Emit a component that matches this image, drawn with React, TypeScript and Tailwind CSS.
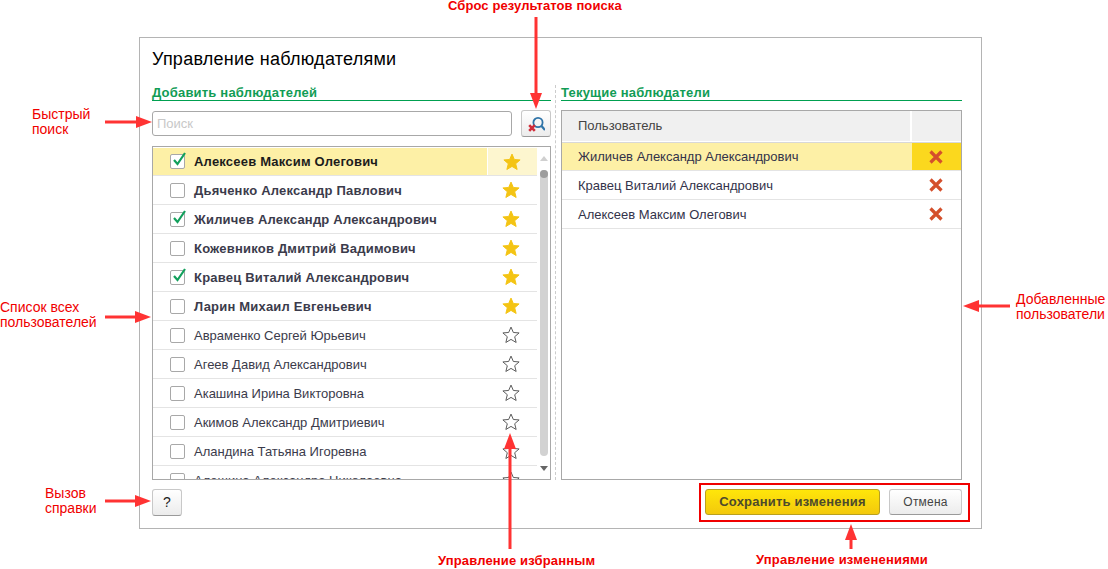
import type { ReactNode } from 'react';

const users = [
  { name: 'Алексеев Максим Олегович', bold: true, checked: true, fav: true, active: true },
  { name: 'Дьяченко Александр Павлович', bold: true, fav: true },
  { name: 'Жиличев Александр Александрович', bold: true, checked: true, fav: true },
  { name: 'Кожевников Дмитрий Вадимович', bold: true, fav: true },
  { name: 'Кравец Виталий Александрович', bold: true, checked: true, fav: true },
  { name: 'Ларин Михаил Евгеньевич', bold: true, fav: true },
  { name: 'Авраменко Сергей Юрьевич' },
  { name: 'Агеев Давид Александрович' },
  { name: 'Акашина Ирина Викторовна' },
  { name: 'Акимов Александр Дмитриевич' },
  { name: 'Аландина Татьяна Игоревна' },
  { name: 'Алешина Александра Николаевна' },
];

const watchers = ['Жиличев Александр Александрович', 'Кравец Виталий Александрович', 'Алексеев Максим Олегович'];

const STAR = '10,1.2 12.6,7.2 19,7.7 14.1,11.9 15.7,18.3 10,14.9 4.3,18.3 5.9,11.9 1,7.7 7.4,7.2';

function Star({ filled }: { filled?: boolean }) {
  return (
    <svg width="18" height="18" viewBox="0 0 20 20">
      <polygon points={STAR} fill={filled ? '#f4c414' : 'none'} stroke={filled ? '#f4c414' : '#5a5a5a'} strokeWidth="1.1" />
    </svg>
  );
}

function Checkbox({ checked }: { checked?: boolean }) {
  return (
    <span className="relative block w-[15px] h-[15px] shrink-0 rounded-[2px] border border-[#a8a8a8] bg-white">
      {checked && (
        <svg className="absolute left-[1px] top-[-4px]" width="15" height="16" viewBox="0 0 15 16">
          <path d="M2 9 L5.5 13 L13 2" fill="none" stroke="#12a05c" strokeWidth="2.2" />
        </svg>
      )}
    </span>
  );
}

function RemoveIcon() {
  return (
    <svg width="14" height="14" viewBox="0 0 14 14">
      <path d="M1.5 1.5 L12.5 12.5 M12.5 1.5 L1.5 12.5" stroke="#d4502c" strokeWidth="3.2" />
    </svg>
  );
}

function Heading({ children }: { children: ReactNode }) {
  return (
    <div className="h-[21px] pt-[5px] border-b border-[#00a050] text-[13px] font-bold leading-[15px] tracking-[0.2px] text-[#119c55]">
      {children}
    </div>
  );
}

function Note({ className, children }: { className: string; children: ReactNode }) {
  return <div className={`absolute text-[#f00000] ${className}`}>{children}</div>;
}

// pointer arrows of the annotations, from tail to tip
function Arrow({ x1, y1, x2, y2 }: { x1: number; y1: number; x2: number; y2: number }) {
  const horizontal = y1 === y2;
  const dir = horizontal ? Math.sign(x2 - x1) : Math.sign(y2 - y1);
  const head = horizontal
    ? `${x2},${y2} ${x2 - 16 * dir},${y2 - 6} ${x2 - 16 * dir},${y2 + 6}`
    : `${x2},${y2} ${x2 - 6},${y2 - 16 * dir} ${x2 + 6},${y2 - 16 * dir}`;
  return (
    <g>
      <line x1={x1} y1={y1} x2={horizontal ? x2 - 14 * dir : x2} y2={horizontal ? y2 : y2 - 14 * dir} stroke="#ff3333" strokeWidth="3" />
      <polygon points={head} fill="#ff3333" />
    </g>
  );
}

export default function App() {
  return (
    <div className="relative w-[1108px] h-[569px] overflow-hidden bg-white font-['Liberation_Sans',Arial,sans-serif] pl-[139px] pt-[37px]">
      <div className="w-[843px] h-[492px] border border-[#b4b4b4] bg-white pl-[12px] pr-[19px] flex flex-col">
        <h1 className="h-[40px] pt-[11px] text-[18px] leading-[21px] tracking-[0.25px] text-black">Управление наблюдателями</h1>

        <div className="flex h-[400px] mt-[2px]">
          {/* Left column */}
          <div className="w-[399px] flex flex-col">
            <Heading>Добавить наблюдателей</Heading>
            <div className="flex h-[27px] items-center justify-between mt-[9px]">
              <input
                placeholder="Поиск"
                className="w-[360px] h-[25px] rounded-[3px] border border-[#a8a8a8] px-[4px] text-[13px] outline-none placeholder:text-[#c8c8c8]"
              />
              <button className="flex items-center justify-center w-[30px] h-[27px] rounded-[3px] border border-[#c8c8c8] border-b-[#9a9a9a] bg-gradient-to-b from-white to-[#ececec]">
                <svg width="18" height="18" viewBox="0 0 18 18">
                  <circle cx="11" cy="7.5" r="4.6" fill="none" stroke="#2f74a8" strokeWidth="1.8" />
                  <path d="M14.5 11 L18 15" stroke="#2f74a8" strokeWidth="2.2" />
                  <path d="M2.2 10.2 L7.8 15.8 M7.8 10.2 L2.2 15.8" stroke="#d02d3a" strokeWidth="2.6" />
                </svg>
              </button>
            </div>
            <div className="mt-[9px] h-[334px] border border-[#a8a8a8] flex overflow-hidden">
              <div className="w-[384px] shrink-0">
                {users.map((user) => (
                  <div
                    key={user.name}
                    className={`flex h-[29px] shrink-0 items-stretch border-b border-[#e4e4e4] ${user.active ? 'bg-[#fdf0a6] border-t border-t-white' : 'bg-white'}`}
                  >
                    <div className="flex-1 flex items-center pl-[17px] gap-[9px]">
                      <Checkbox checked={user.checked} />
                      <span
                        className={`text-[13px] ${user.bold ? 'font-bold tracking-[0.2px]' : ''} ${user.active ? 'text-[#1c1c1c]' : 'pt-[2px] text-[#3b3b4b]'}`}
                      >
                        {user.name}
                      </span>
                    </div>
                    <div className={`w-[50px] pr-[2px] flex items-center justify-center ${user.active ? 'bg-[#fdf6cf] border-l border-white' : ''}`}>
                      <Star filled={user.fav} />
                    </div>
                  </div>
                ))}
              </div>
              {/* Scrollbar */}
              <div className="flex-1 flex flex-col items-center pt-[9px]">
                <span className="h-0 w-0 border-x-[4px] border-b-[5px] border-x-transparent border-b-[#d0d0d0]" />
                <span className="mt-[9px] h-[286px] w-[8px] rounded-full bg-[#d2d2d2]">
                  <span className="block h-[8px] w-[8px] rounded-full bg-[#9c9c9c]" />
                </span>
                <span className="mt-[10px] h-0 w-0 border-x-[4px] border-t-[5px] border-x-transparent border-t-[#666]" />
              </div>
            </div>
          </div>

          {/* Divider */}
          <div className="w-[10px] pl-[4px]">
            <div className="h-[395px] mt-[5px] border-l border-dashed border-[#cccccc]" />
          </div>

          {/* Right column */}
          <div className="w-[401px] flex flex-col">
            <Heading>Текущие наблюдатели</Heading>
            <div className="mt-[9px] h-[370px] border border-[#a8a8a8]">
              <div className="flex h-[32px] border-b border-[#d8d8d8] pb-[1px]">
                <div className="flex-1 flex items-center pl-[16px] bg-[#f0f0f0] text-[13px] text-[#444444] border-r-2 border-white">
                  Пользователь
                </div>
                <div className="w-[49px] bg-[#f0f0f0]" />
              </div>
              {watchers.map((name, i) => (
                <div key={name} className={`flex border-b border-[#e4e4e4] ${i === 0 ? 'h-[28px] bg-[#fdf0a6]' : 'h-[29px]'}`}>
                  <div className={`flex-1 flex items-center pl-[16px] text-[13px] text-[#33334a] ${i === 0 ? '' : 'pt-[2px]'}`}>{name}</div>
                  <div className={`w-[49px] pr-[1px] flex items-center justify-center ${i === 0 ? 'bg-[#fbd81e]' : ''}`}>
                    <RemoveIcon />
                  </div>
                </div>
              ))}
            </div>
          </div>
        </div>

        {/* Footer */}
        <div className="flex justify-between items-start mt-[9px]">
          <button className="w-[30px] h-[27px] rounded-[3px] border border-[#c8c8c8] border-b-[#9a9a9a] bg-gradient-to-b from-white to-[#ececec] text-[14px] text-[#222222]">
            ?
          </button>
          <div className="flex gap-[9px]">
            <button className="w-[175px] h-[26px] rounded-[3px] border border-[#b8a020] bg-gradient-to-b from-[#ffe60a] to-[#f3c90c] text-[13px] font-bold tracking-[0.2px] text-[#4d4a2c]">
              Сохранить изменения
            </button>
            <button className="w-[73px] h-[26px] rounded-[3px] border border-[#c8c8c8] border-b-[#9a9a9a] bg-gradient-to-b from-white to-[#ececec] text-[12px] tracking-[0.2px] text-[#444444]">
              Отмена
            </button>
          </div>
        </div>
      </div>

      {/* Annotations over the dialog */}
      <div className="absolute left-[699px] top-[483px] w-[271px] h-[39px] border-[2px] border-[#f00000]" />

      <svg className="absolute left-0 top-0 pointer-events-none" width="1108" height="569">
        <Arrow x1={536} y1={17} x2={536} y2={109} />
        <Arrow x1={105} y1={122} x2={152} y2={122} />
        <Arrow x1={105} y1={317} x2={151} y2={317} />
        <Arrow x1={1010} y1={306} x2={963} y2={306} />
        <Arrow x1={105} y1={501} x2={151} y2={501} />
        <Arrow x1={510} y1={549} x2={510} y2={433} />
        <Arrow x1={851} y1={549} x2={851} y2={524} />
      </svg>

      <Note className="left-[448px] top-0 text-[13px] font-bold leading-[11px] tracking-[0.1px]">Сброс результатов поиска</Note>
      <Note className="left-[32px] top-[107px] text-[14px] leading-[15px]">Быстрый<br />поиск</Note>
      <Note className="left-0 top-[300px] text-[14px] leading-[15px]">Список всех<br />пользователей</Note>
      <Note className="left-[1016px] top-[292px] text-[14px] leading-[15px]">Добавленные<br />пользователи</Note>
      <Note className="left-[45px] top-[486px] text-[14px] leading-[15px]">Вызов<br />справки</Note>
      <Note className="left-[438px] top-[553px] text-[13px] font-bold leading-[15px] tracking-[0.15px]">Управление избранным</Note>
      <Note className="left-[756px] top-[552px] text-[13px] font-bold leading-[15px] tracking-[0.2px]">Управление изменениями</Note>
    </div>
  );
}
